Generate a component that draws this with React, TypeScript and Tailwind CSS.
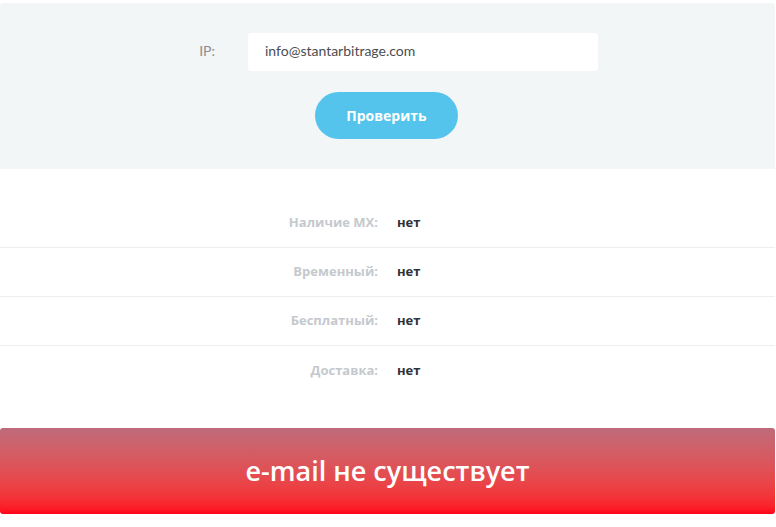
const rows = [
  { label: "Наличие MX:", value: "нет" },
  { label: "Временный:", value: "нет" },
  { label: "Бесплатный:", value: "нет" },
  { label: "Доставка:", value: "нет" },
];

export default function App() {
  return (
    <div className="w-[775px] bg-white pt-[3px] pb-[13px]" style={{ fontFamily: "'Open Sans', sans-serif" }}>
      <section className="rounded-t-[3px] bg-[#f3f6f7] pt-[30px] pb-[30px]">
        <div className="flex items-center">
          <label className="w-[216px] pb-[3px] pr-px text-right text-[14px] text-[#8a8d91] font-['Lato',sans-serif]">IP:</label>
          <div className="ml-[32px] flex h-[38px] w-[350px] items-center rounded-[3px] bg-white pb-[3px] pl-[17px] text-[14px] text-[#4a4d52] font-['Lato',sans-serif]">
            info@stantarbitrage.com
          </div>
        </div>
        <div className="mt-[21px] flex justify-center">
          <button className="ml-[-2px] h-[47px] w-[143px] rounded-full bg-[#55c4ec] text-[14px] font-bold text-white">
            Проверить
          </button>
        </div>
      </section>

      <div className="pt-[30px] pb-[33px]">
        {rows.map((row, i) => (
          <div
            key={row.label}
            className={`flex h-[49px] items-center text-[13px] font-bold ${i < rows.length - 1 ? "border-b border-[#eceeef]" : ""}`}
          >
            <span className="w-[378px] text-right text-[#c5c9cd]">{row.label}</span>
            <span className="ml-[19px] text-[#2f323a]">{row.value}</span>
          </div>
        ))}
      </div>

      <div className="flex h-[86px] items-center justify-center rounded-[3px] bg-gradient-to-b from-[#bf6b7a] to-[#ff0019]">
        <span className="text-[27px] font-semibold text-white">e-mail не существует</span>
      </div>
    </div>
  );
}
